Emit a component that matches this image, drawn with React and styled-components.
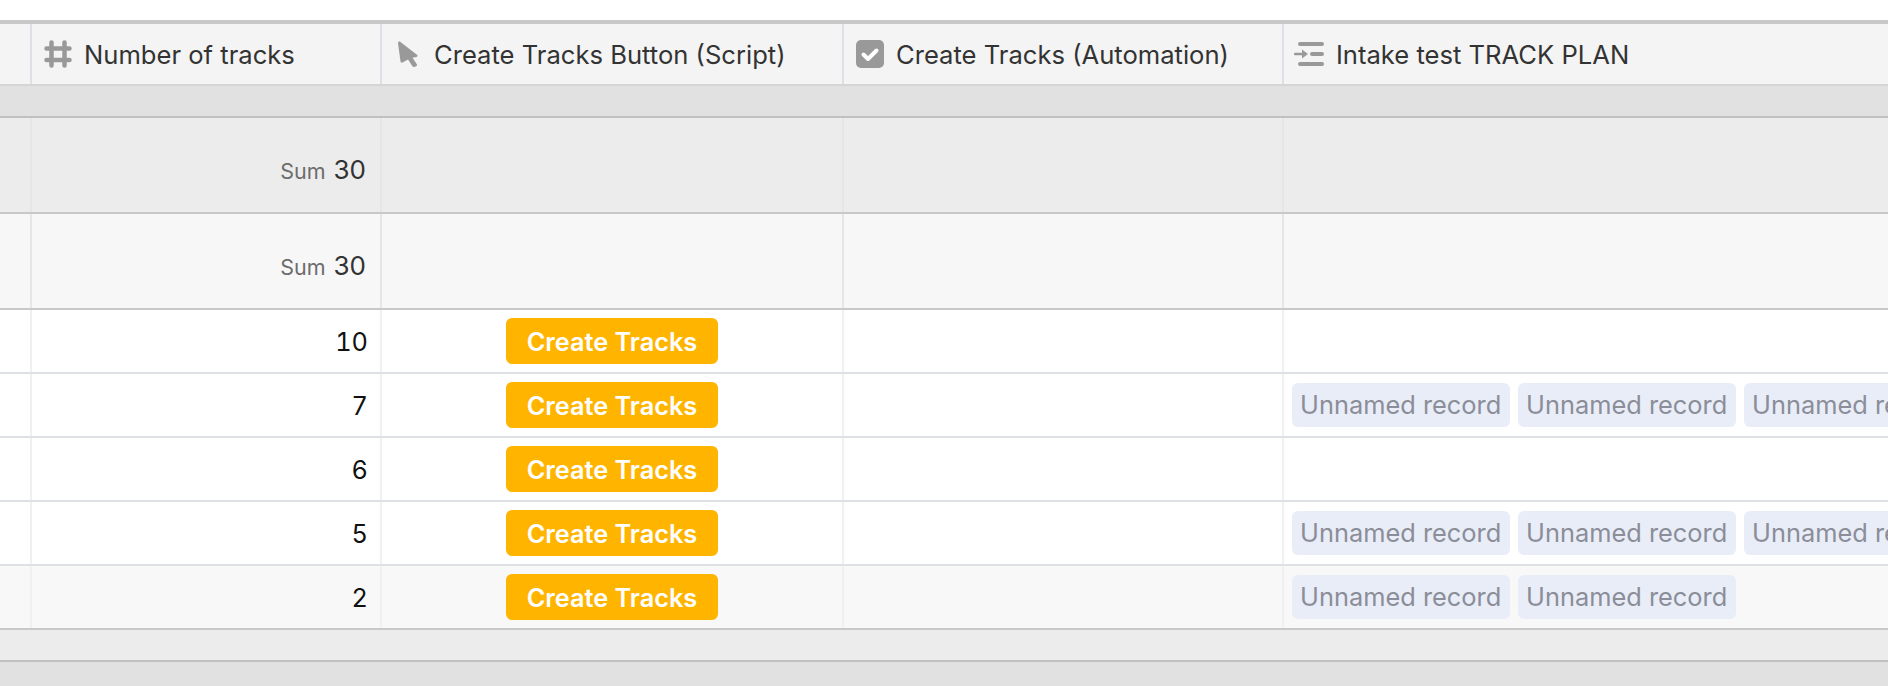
import React from 'react';
import styled, { createGlobalStyle } from 'styled-components';

const Global = createGlobalStyle`
  html, body { margin: 0; padding: 0; background: #fff; overflow: hidden; }
  body { font-family: Inter, "Liberation Sans", sans-serif; }
`;

const Page = styled.div`
  width: 1888px;
  height: 686px;
  overflow: hidden;
  padding-top: 20px;
  box-sizing: border-box;
  display: flex;
  flex-direction: column;
`;

const Row = styled.div`
  display: grid;
  grid-template-columns: 32px 350px 462px 440px 1fr;
  height: ${p => p.$h}px;
  box-sizing: border-box;
  flex: none;
  background: ${p => p.$bg};
  border-top: ${p => p.$top ? `4px solid ${p.$top}` : 'none'};
  border-bottom: 2px solid ${p => p.$line};
`;

const Cell = styled.div`
  box-sizing: border-box;
  min-width: 0;
  overflow: hidden;
  display: flex;
  align-items: center;
  border-right: 2px solid ${p => p.$line};
  &:last-child { border-right: none; }
`;

const HeadCell = styled(Cell)`
  gap: ${p => p.$gap}px;
  padding-left: ${p => p.$pad}px;
  font-size: 25.6px;
  color: #333;
  white-space: nowrap;
`;

const SumCell = styled(Cell)`
  justify-content: flex-end;
  align-items: baseline;
  gap: 8px;
  padding-right: 14px;
  padding-top: 36px;
`;

const SumLabel = styled.span`
  font-size: 21.500px;
  color: #6c6c6c;
`;

const SumValue = styled.span`
  font-size: 26px;
  color: #333;
`;

const NumCell = styled(Cell)`
  justify-content: flex-end;
  padding-right: 12px;
  font-size: 25.3px;
  font-variant-numeric: tabular-nums;
  color: #111;
`;

const ButtonCell = styled(Cell)`
  justify-content: center;
`;

const ActionButton = styled.button`
  width: 212px;
  height: 46px;
  padding: 0;
  border: none;
  border-radius: 6px;
  background: #ffb400;
  color: #fff;
  font-family: inherit;
  font-size: 25.3px;
  font-weight: 600;
`;

const ChipCell = styled(Cell)`
  gap: 8px;
  padding-left: 8px;
`;

const Chip = styled.span`
  flex: none;
  width: 218px;
  height: 44px;
  box-sizing: border-box;
  padding: 0 0 2px 8px;
  display: flex;
  align-items: center;
  border-radius: 6px;
  background: #e9edf8;
  color: #8b8d98;
  font-size: 25.4px;
  white-space: nowrap;
`;

const Icon = styled.svg`
  flex: none;
  display: block;
  color: #999;
`;

const HashIcon = () => (
  <Icon width="28" height="28" viewBox="0 0 28 28" fill="none" stroke="currentColor" strokeWidth="4.5" strokeLinecap="round">
    <path d="M7.500 2.500v23M20.500 2.500v23M2.500 8.500h23M2.500 20h23" />
  </Icon>
);

const CursorIcon = () => (
  <Icon width="20" height="26" viewBox="0 0 20 26" fill="currentColor">
    <path d="M1.800 .6 L19.300 14 Q20 15.500 18.500 16 L14.500 16.800 L19 23.500 Q19.300 24.800 18 25.300 L16.500 26 Q15 26.200 14.300 25 L10 18.500 L4.500 21.500 Q2.800 22 2.500 20.500 L0 2 Q.2 .2 1.800 .6 Z" />
  </Icon>
);

const CheckIcon = () => (
  <Icon width="28" height="28" viewBox="0 0 28 28">
    <rect width="28" height="28" rx="5" fill="currentColor" />
    <path d="M7.500 14.500 L12 19 L20.500 10.500" fill="none" stroke="#fff" strokeWidth="4" strokeLinecap="round" strokeLinejoin="round" />
  </Icon>
);

const LookupIcon = () => (
  <Icon width="30" height="24" viewBox="0 0 30 24" fill="none" stroke="currentColor" strokeWidth="4" strokeLinecap="round">
    <path d="M6 2h22M6 22h22M18 12h10" />
    <path d="M1 12h8" strokeWidth="2.500" />
    <path d="M8 7.500 L14 12 L8 16.500 Z" fill="currentColor" stroke="none" />
  </Icon>
);

const LINE = '#eff0f2';
const HEAD = '#dde1e6';
const SOFT = '#e6e6e6';

const ROWS = [
  { n: 10, chips: 0 },
  { n: 7, chips: 3 },
  { n: 6, chips: 0 },
  { n: 5, chips: 3 },
  { n: 2, chips: 2, last: true },
];

const SumRow = ({ bg, line }) => (
  <Row $h={96} $bg={bg} $line="#c8c8c8">
    <Cell $line={line} />
    <SumCell $line={line}>
      <SumLabel>Sum</SumLabel>
      <SumValue>30</SumValue>
    </SumCell>
    <Cell $line={line} />
    <Cell $line={line} />
    <Cell $line={line} />
  </Row>
);

export default function App() {
  return (
    <Page>
      <Global />
      <Row $h={66} $bg="#f4f4f4" $top="#c8c8c8" $line="#d5d5d5">
        <Cell $line={HEAD} />
        <HeadCell $line={HEAD} $pad={12} $gap={12}><HashIcon />Number of tracks</HeadCell>
        <HeadCell $line={HEAD} $pad={16} $gap={16}><CursorIcon />Create Tracks Button (Script)</HeadCell>
        <HeadCell $line={HEAD} $pad={12} $gap={12}><CheckIcon />Create Tracks (Automation)</HeadCell>
        <HeadCell $line={HEAD} $pad={10} $gap={12}><LookupIcon />Intake test TRACK PLAN</HeadCell>
      </Row>
      <Row $h={32} $bg="#e1e1e1" $line="#c0c0c0" />
      <SumRow bg="#ececec" line={SOFT} />
      <SumRow bg="#f7f7f7" line={SOFT} />
      {ROWS.map(r => (
        <Row key={r.n} $h={64} $bg={r.last ? '#f8f8f8' : '#fff'} $line={r.last ? '#c8c8c8' : '#dde1e5'}>
          <Cell $line={LINE} />
          <NumCell $line={LINE}>{r.n}</NumCell>
          <ButtonCell $line={LINE}><ActionButton>Create Tracks</ActionButton></ButtonCell>
          <Cell $line={LINE} />
          <ChipCell $line={LINE}>
            {Array.from({ length: r.chips }, (_, i) => <Chip key={i}>Unnamed record</Chip>)}
          </ChipCell>
        </Row>
      ))}
      <Row $h={32} $bg="#ececec" $line="#c0c0c0" />
      <Row $h={24} $bg="#e1e1e1" $line="#e1e1e1" />
    </Page>
  );
}
